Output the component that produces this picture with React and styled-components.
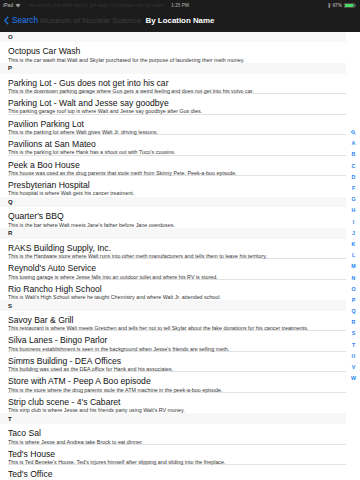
import React from "react";
import styled, { createGlobalStyle } from "styled-components";

const Global = createGlobalStyle`
  html, body { margin: 0; padding: 0; background: #fff; }
  body { width: 360px; height: 480px; overflow: hidden; font-family: "Liberation Sans", Arial, sans-serif; }
  * { box-sizing: border-box; }
`;

const Screen = styled.div`
  width: 360px;
  height: 480px;
  display: flex;
  flex-direction: column;
  overflow: hidden;
  background: #fff;
`;

const Bar = styled.header`
  flex: 0 0 31.5px;
  background: #1c1c1c;
  display: flex;
  flex-direction: column;
`;

const Status = styled.div`
  height: 10px;
  display: flex;
  align-items: center;
  justify-content: space-between;
  padding: 0 4px 0 3px;
  font-size: 4.8px;
  color: #9a9a9a;
  position: relative;
`;

const StatusLeft = styled.div`
  display: flex;
  align-items: center;
  gap: 2px;
  font-weight: bold;
`;

const Ghost = styled.span`
  color: #343434;
  font-weight: normal;
  margin-left: 6px;
  white-space: nowrap;
`;

const Time = styled.div`
  position: absolute;
  left: 0;
  right: 0;
  text-align: center;
  color: #8a8a8a;
  font-weight: bold;
`;

const StatusRight = styled.div`
  display: flex;
  align-items: center;
  gap: 2px;
  color: #9a9a9a;
  font-weight: bold;
`;

const Nav = styled.div`
  flex: 1;
  display: flex;
  align-items: center;
  position: relative;
  padding-left: 4px;
`;

const Back = styled.div`
  display: flex;
  align-items: center;
  gap: 3px;
  color: #1f7ff6;
  font-size: 8.2px;
  z-index: 1;
`;

const PrevTitle = styled.span`
  color: #3c3c3c;
  font-size: 8.1px;
  margin-left: 2px;
  white-space: nowrap;
`;

const Title = styled.div`
  position: absolute;
  left: 0;
  right: 0;
  text-align: center;
  color: #fff;
  font-weight: bold;
  font-size: 7.9px;
  pointer-events: none;
`;

const Body = styled.div`
  flex: 1;
  min-height: 0;
  display: flex;
  overflow: hidden;
`;

const List = styled.div`
  width: 346px;
  flex: 0 0 346px;
  display: flex;
  flex-direction: column;
`;

const SectionHead = styled.div`
  flex: 0 0 10.8px;
  height: 10.8px;
  background: #f7f7f7;
  padding-left: 8px;
  display: flex;
  align-items: center;
  font-size: 6px;
  font-weight: bold;
  color: #222;
`;

const Row = styled.div`
  flex: 0 0 20.5px;
  height: 20.5px;
  margin-left: 8px;
  padding-top: 5px;
  border-bottom: ${(p) => (p.$last ? "none" : "0.5px solid #e2e2e2")};
  display: flex;
  flex-direction: column;
  white-space: nowrap;
`;

const RowTitle = styled.div`
  font-size: 8.6px;
  line-height: 8px;
  color: #111;
`;

const RowSub = styled.div`
  font-size: 5.35px;
  line-height: 8px;
  margin-top: 0.4px;
  color: #333;
`;

const Index = styled.div`
  flex: 1;
  display: flex;
  flex-direction: column;
  justify-content: center;
  align-items: center;
`;

const IndexItem = styled.div`
  height: 11.2px;
  line-height: 11.2px;
  font-size: 5.3px;
  font-weight: bold;
  color: #1f7ff6;
  display: flex;
  align-items: center;
  justify-content: center;
  padding-left: 1px;
`;

const sections = [
  ["O", [
    ["Octopus Car Wash", "This is the car wash that Walt and Skylar purchased for the purpose of laundering their meth money."],
  ]],
  ["P", [
    ["Parking Lot - Gus does not get into his car", "This is the downtown parking garage where Gus gets a weird feeling and does not get into his volvo car."],
    ["Parking Lot - Walt and Jesse say goodbye", "This parking garage roof top is where Walt and Jesse say goodbye after Gus dies."],
    ["Pavilion Parking Lot", "This is the parking lot where Walt gives Walt Jr. driving lessons."],
    ["Pavilions at San Mateo", "This is the parking lot where Hank has a shoot out with Tuco's cousins."],
    ["Peek a Boo House", "This house was used as the drug parents that stole meth from Skinny Pete. Peek-a-boo episode."],
    ["Presbyterian Hospital", "This hospital is where Walt gets his cancer treatment."],
  ]],
  ["Q", [
    ["Quarter's BBQ", "This is the bar where Walt meets Jane's father before Jane overdoses."],
  ]],
  ["R", [
    ["RAKS Building Supply, Inc.", "This is the Hardware store where Walt runs into other meth manufacturers and tells them to leave his territory."],
    ["Reynold's Auto Service", "This towing garage is where Jesse falls into an outdoor toilet and where his RV is stored."],
    ["Rio Rancho High School", "This is Walt's High School where he taught Chemistry and where Walt Jr. attended school."],
  ]],
  ["S", [
    ["Savoy Bar & Grill", "This restaurant is where Walt meets Gretchen and tells her not to tell Skylar about the fake donations for his cancer treatments."],
    ["Silva Lanes - Bingo Parlor", "This business establishment is seen in the background when Jesse's friends are selling meth."],
    ["Simms Building - DEA Offices", "This building was used as the DEA office for Hank and his associates."],
    ["Store with ATM - Peep A Boo episode", "This is the store where the drug parents stole the ATM machine in the peek-a-boo episode."],
    ["Strip club scene - 4's Cabaret", "This strip club is where Jesse and his friends party using Walt's RV money."],
  ]],
  ["T", [
    ["Taco Sal", "This is where Jesse and Andrea take Brock to eat dinner."],
    ["Ted's House", "This is Ted Beneke's House. Ted's injures himself after slipping and sliding into the fireplace."],
    ["Ted's Office", "This is the office where Ted works."],
  ]],
];

const letters = "ABCDFGHIJKLMNOPQRSTUVW".split("");

const Wifi = () => (
  <svg width="6" height="5" viewBox="0 0 12 10">
    <path d="M6 9 L1 3.5 A7.5 7.5 0 0 1 11 3.5 Z" fill="#9a9a9a" />
  </svg>
);

const Battery = () => (
  <svg width="12" height="5" viewBox="0 0 24 10">
    <rect x="0.5" y="0.5" width="20" height="9" rx="1.5" fill="none" stroke="#9a9a9a" />
    <rect x="2" y="2" width="17" height="6" fill="#4cd964" />
    <rect x="21.5" y="3" width="1.5" height="4" fill="#9a9a9a" />
  </svg>
);

const Chevron = () => (
  <svg width="5" height="9" viewBox="0 0 5 9">
    <path d="M4.3 0.6 L0.8 4.5 L4.3 8.4" fill="none" stroke="#1f7ff6" strokeWidth="1.2" />
  </svg>
);

const SearchGlyph = () => (
  <svg width="5" height="5" viewBox="0 0 10 10">
    <circle cx="4" cy="4" r="2.8" fill="none" stroke="#1f7ff6" strokeWidth="1.6" />
    <path d="M6 6 L9 9" stroke="#1f7ff6" strokeWidth="1.8" />
  </svg>
);

export default function App() {
  return (
    <Screen>
      <Global />
      <Bar>
        <Status>
          <StatusLeft>
            iPad <Wifi />
            <Ghost>the last tile that Walt tried to get away to purchase the car wash</Ghost>
          </StatusLeft>
          <Time>1:25 PM</Time>
          <StatusRight>
            <span>∦ 97%</span>
            <Battery />
          </StatusRight>
        </Status>
        <Nav>
          <Back>
            <Chevron />
            <span>Search</span>
          </Back>
          <PrevTitle>Museum of Nuclear Science</PrevTitle>
          <Title>By Location Name</Title>
        </Nav>
      </Bar>
      <Body>
        <List>
          {sections.map(([letter, rows]) => (
            <React.Fragment key={letter}>
              <SectionHead>{letter}</SectionHead>
              {rows.map(([t, s], i) => (
                <Row key={t} $last={i === rows.length - 1}>
                  <RowTitle>{t}</RowTitle>
                  <RowSub>{s}</RowSub>
                </Row>
              ))}
            </React.Fragment>
          ))}
        </List>
        <Index>
          <IndexItem><SearchGlyph /></IndexItem>
          {letters.map((l) => (
            <IndexItem key={l}>{l}</IndexItem>
          ))}
        </Index>
      </Body>
    </Screen>
  );
}
